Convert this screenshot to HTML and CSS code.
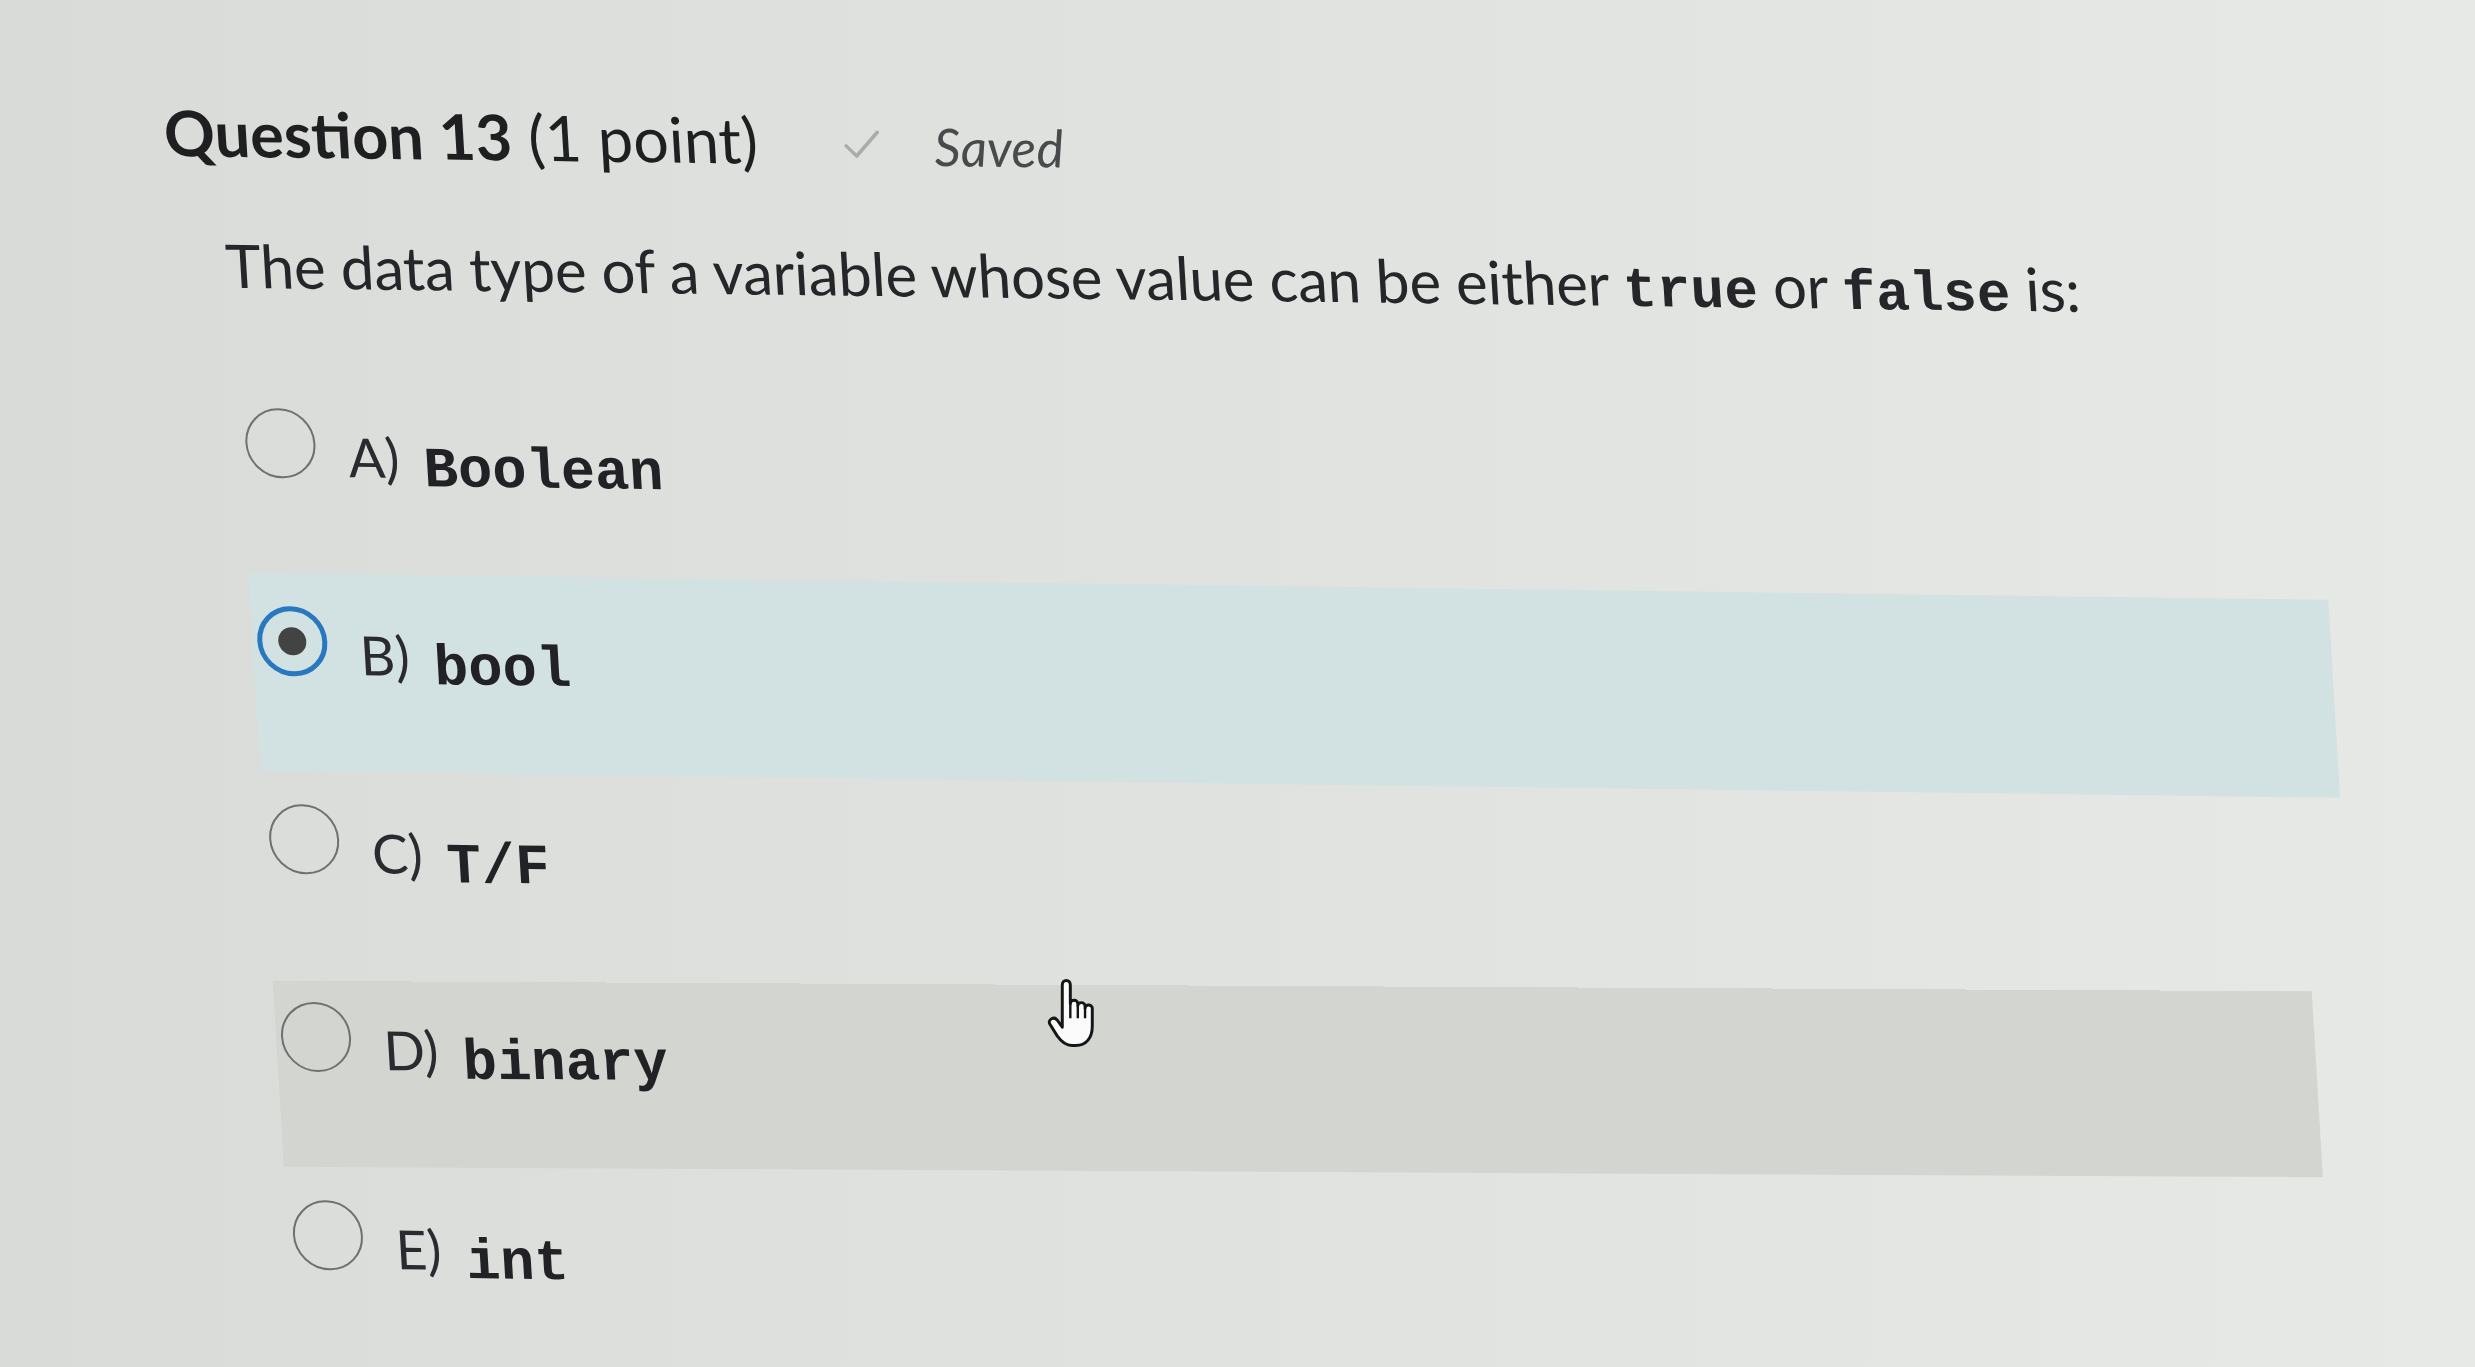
FILE: index.html
```html
<!DOCTYPE html>
<html lang="en">
<head>
<meta charset="utf-8">
<title>Question 13</title>
<link rel="stylesheet" href="styles.css">
</head>
<body>
<div class="screen">
  <main class="quiz">
    <header class="q-head">
      <h2 class="q-title"><strong>Question 13</strong> <span class="pts">(1 point)</span></h2>
      <span class="saved">
        <svg class="check" viewBox="0 0 40 32" width="40" height="32" aria-hidden="true"><path d="M4 17 L14 27 L36 3" fill="none" stroke="#a9aca8" stroke-width="3.5" stroke-linecap="round" stroke-linejoin="round"/></svg>
        <em>Saved</em>
      </span>
    </header>
    <p class="q-text">The data type of a variable whose value can be either <code>true</code> or <code>false</code> is:</p>
    <ul class="options">
      <li class="opt"><span class="radio"></span><span class="lbl">A)</span><code class="ans">Boolean</code></li>
      <li class="opt selected"><span class="radio"></span><span class="lbl">B)</span><code class="ans">bool</code></li>
      <li class="opt"><span class="radio"></span><span class="lbl">C)</span><code class="ans">T/F</code></li>
      <li class="opt hover"><span class="radio"></span><span class="lbl">D)</span><code class="ans">binary</code></li>
      <li class="opt"><span class="radio"></span><span class="lbl">E)</span><code class="ans">int</code></li>
    </ul>
  </main>
  <div class="cursor" aria-hidden="true">
    <svg viewBox="0 0 20 28" width="54" height="75">
      <path d="M6 2.6 C6 1.5 6.7 0.9 7.5 0.9 C8.3 0.9 9 1.5 9 2.6 V9.6 C9 8.8 9.7 8.3 10.4 8.3 C11.1 8.3 11.8 8.8 11.8 9.6 V10.4 C11.8 9.7 12.4 9.2 13.1 9.2 C13.8 9.2 14.5 9.7 14.5 10.4 V11.3 C14.5 10.6 15.1 10.1 15.8 10.1 C16.5 10.1 17.2 10.6 17.2 11.3 V18 C17.2 22.2 15 25.2 11 25.2 H9.6 C7.1 25.2 5.6 23.7 4.1 21.6 L1.4 17.3 C0.9 16.5 1.2 15.6 2 15.2 C2.8 14.8 3.7 15.1 4.2 15.8 L6 18.4 Z" fill="#fbfbfb" stroke="#151515" stroke-width="1.1" stroke-linejoin="round"/>
      <path d="M9 9.6 V15 M11.8 10.4 V15 M14.5 11.3 V15" fill="none" stroke="#151515" stroke-width="0.9"/>
    </svg>
  </div>
</div>
</body>
</html>
```

FILE: styles.css
```css
html, body {
  margin: 0;
  padding: 0;
}

body {
  width: 2475px;
  height: 1367px;
  overflow: hidden;
  background: linear-gradient(90deg, #d8dbd7 0%, #dde0dc 30%, #e1e4e0 65%, #e7e9e6 100%);
  font-family: Lato, "Open Sans", "Liberation Sans", sans-serif;
  color: #26262a;
}

.screen {
  position: relative;
  width: 2475px;
  height: 1367px;
}

.quiz {
  transform-origin: 0 0;
  transform: matrix(1, 0.013, 0.06, 1, 0, 0);
  padding-top: 98px;
}

.q-head {
  display: flex;
  align-items: baseline;
  padding-left: 156px;
}

.q-title {
  margin: 0;
  font-size: 63px;
  line-height: 1;
  font-weight: 400;
  color: #1f1f22;
}

.q-title strong {
  font-weight: 700;
}

.saved {
  display: inline-flex;
  align-items: baseline;
  margin-left: 84px;
  font-size: 52px;
  line-height: 1;
  color: #4a4a4d;
}

.saved .check {
  margin-right: 52px;
  align-self: center;
}

.saved em {
  font-style: italic;
}

.q-text {
  margin: 71px 0 0 210px;
  font-size: 60px;
  line-height: 1;
  white-space: nowrap;
  letter-spacing: -0.2px;
}

.q-text code {
  font-family: "Liberation Mono", "Courier New", monospace;
  font-weight: 700;
  font-size: 56px;
  letter-spacing: 0;
}

.options {
  list-style: none;
  margin: 74px 0 0 214px;
  padding: 0;
  width: 2080px;
}

.opt {
  display: flex;
  align-items: flex-start;
  height: 198px;
  padding-left: 5px;
  box-sizing: border-box;
}

.opt.selected {
  background: #d2e1e1;
}

.opt.hover {
  background: linear-gradient(transparent 12px, #d3d5d1 12px);
  width: 2040px;
  transform-origin: 0 0;
  transform: skewY(-0.45deg);
}

.radio {
  flex: none;
  width: 70px;
  height: 70px;
  margin-top: 33px;
  box-sizing: border-box;
  border: 2.2px solid #707072;
  border-radius: 50%;
  display: flex;
  align-items: center;
  justify-content: center;
}

.selected .radio {
  border: 5px solid #2878c0;
}

.selected .radio::after {
  content: "";
  width: 28px;
  height: 28px;
  border-radius: 50%;
  background: #434343;
}

.lbl {
  margin: 54px 0 0 32px;
  font-size: 54px;
  line-height: 1;
  color: #2a2a30;
}

.ans {
  margin: 66px 0 0 24px;
  font-family: "Liberation Mono", "Courier New", monospace;
  font-weight: 700;
  font-size: 57px;
  line-height: 1;
  color: #222226;
}

.cursor {
  position: absolute;
  left: 1046px;
  top: 978px;
}
```
